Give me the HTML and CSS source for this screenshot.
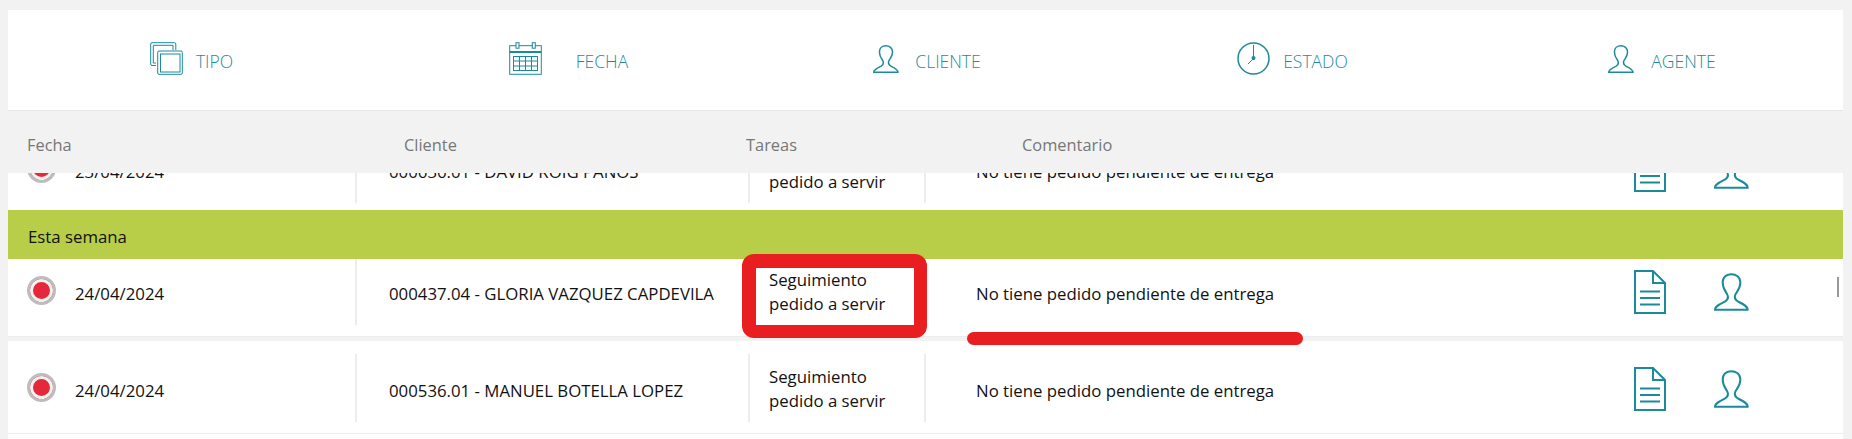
FILE: index.html
```html
<!DOCTYPE html>
<html lang="es">
<head>
<meta charset="utf-8">
<title>Tareas</title>
<link rel="stylesheet" href="styles.css">
</head>
<body>
<svg class="defs" width="0" height="0" aria-hidden="true">
  <symbol id="i-person" viewBox="0 0 105 113"><path d="M3 110H101C102 100 88 93 72 85C63 80 60 72 65 62C72 52 79 45 79 28C79 12 66 3 52 3C38 3 26 12 26 28C26 45 32 52 39 62C44 72 42 80 33 85C17 93 2 100 3 110Z"/></symbol>
  <symbol id="i-doc" viewBox="0 0 32 44"><path d="M1 1H19L31 13V43H1Z"/><path d="M19 1V13H31"/><path d="M6 21.500H26M6 28H26M6 34.500H26"/></symbol>
  <symbol id="i-layers" viewBox="0 0 33 33"><path d="M6 23.500H2Q.7 23.500 .7 22V2Q.7 .7 2 .7H24.500Q25.800 .7 25.800 2V8"/><path d="M6 21H3.300V3.300H23V8"/><rect x="7.700" y="9" width="24.600" height="23.300" rx="1.300"/><rect x="10.500" y="12" width="19.500" height="18"/></symbol>
  <symbol id="i-cal" viewBox="0 0 33 33"><rect x=".7" y="3.700" width="31.600" height="28.600"/><path d="M.7 10H32.300" stroke-width="2"/><rect x="7" y=".7" width="3" height="5.500" fill="#fff"/><rect x="23.300" y=".7" width="3" height="5.500" fill="#fff"/><rect x="4.500" y="14.500" width="24" height="14"/><path d="M4.500 19H28.500M4.500 24H28.500M10.500 14.500V28.500M16.500 14.500V28.500M22.500 14.500V28.500"/></symbol>
  <symbol id="i-clock" viewBox="0 0 33 33"><circle cx="16.500" cy="16.500" r="15.500" stroke-width="1.500"/><path d="M16.500 3V16.500L11 22"/><circle class="solid" cx="16.500" cy="16" r="2"/></symbol>
</svg>

<div class="panel">
  <nav class="filters">
    <a class="filter"><svg class="ico ico-33"><use href="#i-layers"/></svg><span>TIPO</span></a>
    <a class="filter filter-wide"><svg class="ico ico-33"><use href="#i-cal"/></svg><span>FECHA</span></a>
    <a class="filter filter-cli"><svg class="ico ico-person-s"><use href="#i-person"/></svg><span>CLIENTE</span></a>
    <a class="filter"><svg class="ico ico-33"><use href="#i-clock"/></svg><span>ESTADO</span></a>
    <a class="filter filter-mid"><svg class="ico ico-person-s"><use href="#i-person"/></svg><span>AGENTE</span></a>
  </nav>

  <div class="cols head">
    <div class="h-fecha">Fecha</div>
    <div class="h-cliente">Cliente</div>
    <div class="h-tareas">Tareas</div>
    <div class="h-comentario">Comentario</div>
  </div>

  <div class="list">
    <div class="clip clip-a">
      <div class="row">
        <div class="cell c-fecha"><span class="dot"></span><span>23/04/2024</span></div>
        <div class="cell c-cliente">000636.01 - DAVID ROIG PANOS</div>
        <div class="cell c-tareas">Seguimiento<br>pedido a servir</div>
        <div class="cell c-comentario">No tiene pedido pendiente de entrega</div>
        <div class="cell c-actions"><svg class="ico ico-doc"><use href="#i-doc"/></svg><svg class="ico ico-person"><use href="#i-person"/></svg></div>
      </div>
    </div>

    <div class="group">Esta semana</div>

    <div class="clip clip-b">
      <div class="row">
        <div class="cell c-fecha"><span class="dot"></span><span>24/04/2024</span></div>
        <div class="cell c-cliente">000437.04 - GLORIA VAZQUEZ CAPDEVILA</div>
        <div class="cell c-tareas">Seguimiento<br>pedido a servir</div>
        <div class="cell c-comentario">No tiene pedido pendiente de entrega</div>
        <div class="cell c-actions"><svg class="ico ico-doc"><use href="#i-doc"/></svg><svg class="ico ico-person"><use href="#i-person"/></svg></div>
      </div>
    </div>

    <div class="row row-full">
      <div class="cell c-fecha"><span class="dot"></span><span>24/04/2024</span></div>
      <div class="cell c-cliente">000536.01 - MANUEL BOTELLA LOPEZ</div>
      <div class="cell c-tareas">Seguimiento<br>pedido a servir</div>
      <div class="cell c-comentario">No tiene pedido pendiente de entrega</div>
      <div class="cell c-actions"><svg class="ico ico-doc"><use href="#i-doc"/></svg><svg class="ico ico-person"><use href="#i-person"/></svg></div>
    </div>

    <div class="thumb"></div>
  </div>
</div>

<div class="mark-box"></div>
<div class="mark-line"></div>
</body>
</html>
```

FILE: styles.css
```css
* { box-sizing: border-box; }
html, body { height: 439px; overflow: hidden; }
body {
  margin: 0;
  padding: 10px 9px 0 8px;
  background: #f2f2f2;
  font-family: "Open Sans", "Noto Sans", sans-serif;
  font-size: 16.8px;
  color: #111;
  position: relative;
}
.defs { position: absolute; }
.panel { background: #fff; height: 429px; display: flex; flex-direction: column; }

.ico { display: block; flex: none; fill: none; stroke: #1b8a9a; stroke-width: 1; }
.ico .solid { fill: #1b8a9a; }
#i-person path { stroke-width: 6; }
#i-doc path { stroke-width: 2; }
.solid { fill: #1b8a9a; stroke: none; }
.ico-33 { width: 33px; height: 33px; }
.ico-person-s { width: 26px; height: 28px; }
.ico-doc { width: 32px; height: 44px; }
.ico-person { width: 35px; height: 38px; }

.filters {
  height: 101px;
  border-bottom: 1px solid #e6e6e6;
  display: grid;
  grid-template-columns: repeat(5, 1fr);
  flex: none;
}
.filter {
  display: flex; align-items: center; justify-content: center;
  gap: 13px;
  padding-bottom: 3px;
  color: #1f8a9a;
  font-size: 17.500px;
  font-weight: 300;
}
.filter span { padding-top: 4px; }
.filter-wide { gap: 34px; padding-left: 20px; }
.filter-cli { gap: 16px; padding-left: 3px; }
.filter-mid { gap: 17px; padding-left: 5px; }

.cols { flex: none; }
.head {
  height: 62px;
  background: #f2f2f2;
  margin-right: -9px;
  margin-left: -8px;
  padding: 4px 8px 0;
  display: flex;
  align-items: center;
  color: #777;
  font-size: 16.400px;
  font-weight: 400;
}
.h-fecha { width: 396px; padding-left: 19px; }
.h-cliente { width: 342px; }
.h-tareas { width: 276px; }

.list { position: relative; flex: 1; min-height: 0; }
.clip { overflow: hidden; display: flex; flex-direction: column; justify-content: flex-end; }
.clip-a { height: 37px; }
.clip-a .row { margin-bottom: -4px; }
.clip-b { height: 78px; border-bottom: 1px solid #ececec; }
.group {
  height: 49px;
  background: #b8cd48;
  display: flex; align-items: center;
  padding: 3px 0 0 20px;
  color: #111;
}
.row {
  height: 92px;
  flex: none;
  display: flex;
  padding: 13px 0 11px;
}
.row-full { border-bottom: 1px solid #ececec; height: 93px; margin-top: 4px; background: #fff; box-shadow: 0 -4px 0 #f2f2f2; }
.clip-b .row { padding-bottom: 11px; }
.cell { display: flex; align-items: center; border-right: 2px solid #ececec; padding-top: 4px; }
.c-fecha { width: 349px; padding-left: 19px; gap: 19px; }
.c-cliente { width: 393px; padding-left: 32px; white-space: nowrap; }
.c-tareas { width: 176px; padding-left: 19px; display: block; padding-top: 11px; line-height: 24px; white-space: nowrap; }
.c-comentario { width: 693px; padding-left: 50px; border-right: 0; }
.c-actions { border-right: 0; gap: 48px; padding: 2px 0 0 15px; }

.dot {
  width: 29px; height: 29px; border-radius: 50%; flex: none;
  margin-top: -6px;
  background: #e6293a;
  border: 3px solid #bdbdbd;
  box-shadow: inset 0 0 0 3px #f1f1f1;
}
.thumb { position: absolute; right: 4px; top: 104px; width: 2px; height: 20px; background: #999; }

.mark-box {
  position: absolute; left: 742px; top: 254px; width: 185px; height: 84px;
  border: solid #e81e20; border-width: 14px 13px 13px 14px;
  border-radius: 12px;
}
.mark-line {
  position: absolute; left: 967px; top: 332px; width: 336px; height: 13px;
  background: #e81e20; border-radius: 7px;
}
```
